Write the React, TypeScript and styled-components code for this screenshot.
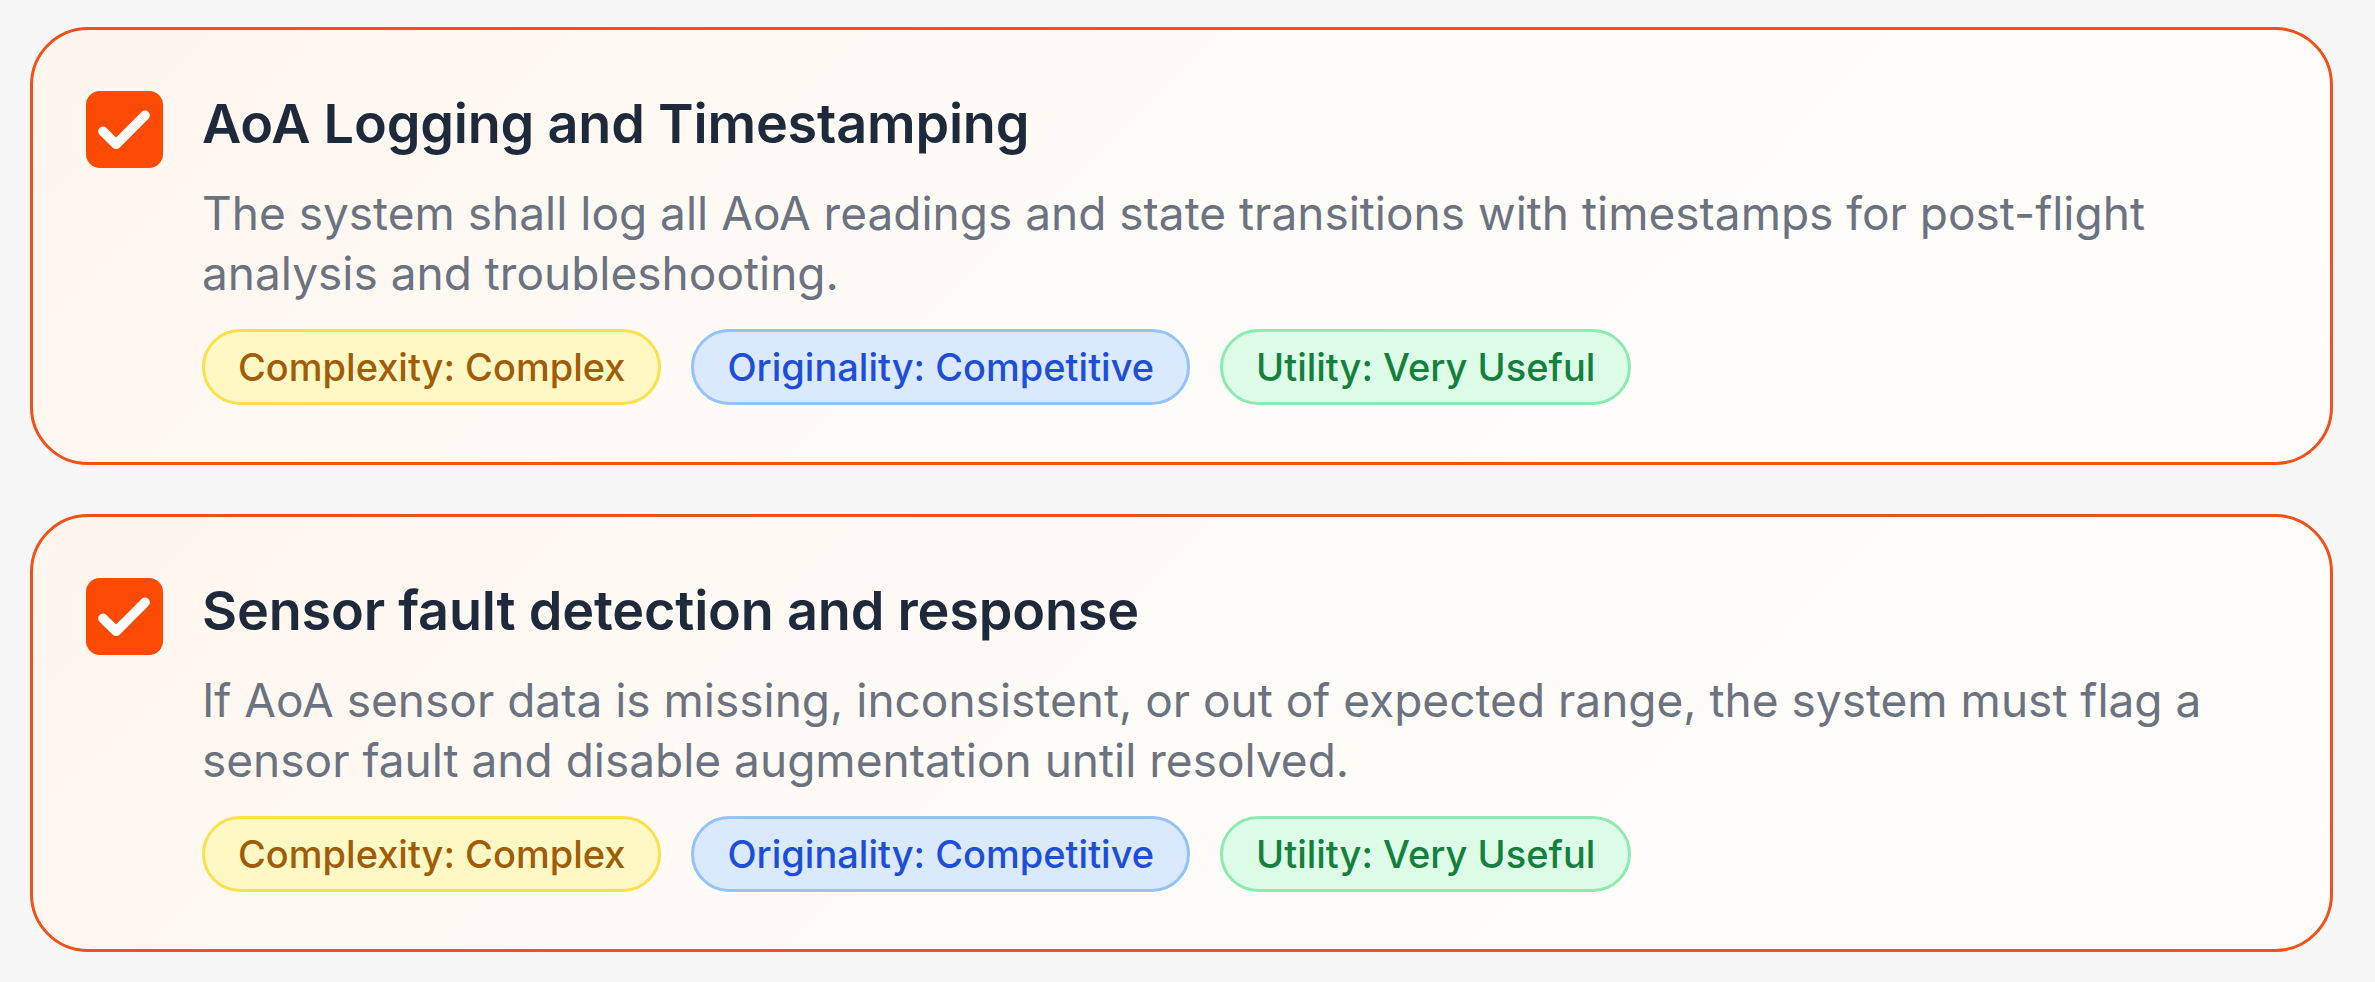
import styled, { createGlobalStyle } from "styled-components";

const GlobalStyle = createGlobalStyle`
    html, body {
        margin: 0;
        padding: 0;
        background: #f7f7f8;
        font-family: Inter, "Noto Sans", sans-serif;
    }
`;

const Page = styled.div`
    display: flex;
    flex-direction: column;
    gap: 49px;
    padding: 27px 42px 32px 30px;
`;

const Card = styled.div`
    display: flex;
    align-items: flex-start;
    gap: 39px;
    padding: 53px 56px 57px 53px;
    border: 3px solid #f3501a;
    border-radius: 58px;
    background: linear-gradient(135deg, #fff6ee 0%, #fffbf7 45%, #fffdfb 100%);
`;

const CheckBox = styled.div`
    flex: 0 0 auto;
    width: 77px;
    height: 77px;
    margin-top: 8px;
    border-radius: 14px;
    background: #fd4a04;
    display: flex;
    align-items: center;
    justify-content: center;
`;

const Content = styled.div`
    display: flex;
    flex-direction: column;
    min-width: 0;
`;

const Title = styled.h2`
    margin: 0;
    font-size: 54px;
    line-height: 82px;
    font-weight: 600;
    color: #1e293b;
    letter-spacing: -0.2px;
`;

const Description = styled.p`
    margin: 18px 0 0 0;
    font-size: 46px;
    line-height: 60px;
    font-weight: 400;
    color: #6b7280;
`;

const Badges = styled.div`
    display: flex;
    gap: 30px;
    margin-top: 26px;
`;

type Tone = "yellow" | "blue" | "green";

const tones: Record<Tone, { bg: string; border: string; text: string }> = {
    yellow: { bg: "#fef8c4", border: "#fcdf4a", text: "#a15c07" },
    blue: { bg: "#dbe9fe", border: "#93c3fb", text: "#1d4ed8" },
    green: { bg: "#dcfce7", border: "#8deab0", text: "#15803d" },
};

const Badge = styled.span<{ $tone: Tone }>`
    display: inline-flex;
    align-items: center;
    height: 76px;
    box-sizing: border-box;
    padding: 0 33px;
    border-radius: 999px;
    border: 3px solid ${(p) => tones[p.$tone].border};
    background: ${(p) => tones[p.$tone].bg};
    color: ${(p) => tones[p.$tone].text};
    font-size: 38px;
    font-weight: 500;
    white-space: nowrap;
`;

const Check = () => (
    <svg width="77" height="77" viewBox="0 0 24 24" fill="none">
        <path
            d="M5.3 12.6 L9.4 16.6 L18.4 7.6"
            stroke="#ffffff"
            strokeWidth="3"
            strokeLinecap="round"
            strokeLinejoin="round"
        />
    </svg>
);

const items = [
    {
        title: "AoA Logging and Timestamping",
        description:
            "The system shall log all AoA readings and state transitions with timestamps for post-flight analysis and troubleshooting.",
    },
    {
        title: "Sensor fault detection and response",
        description:
            "If AoA sensor data is missing, inconsistent, or out of expected range, the system must flag a sensor fault and disable augmentation until resolved.",
    },
];

export default function App() {
    return (
        <>
            <GlobalStyle />
            <Page>
                {items.map((item) => (
                    <Card key={item.title}>
                        <CheckBox>
                            <Check />
                        </CheckBox>
                        <Content>
                            <Title>{item.title}</Title>
                            <Description>{item.description}</Description>
                            <Badges>
                                <Badge $tone="yellow">Complexity: Complex</Badge>
                                <Badge $tone="blue">Originality: Competitive</Badge>
                                <Badge $tone="green">Utility: Very Useful</Badge>
                            </Badges>
                        </Content>
                    </Card>
                ))}
            </Page>
        </>
    );
}
